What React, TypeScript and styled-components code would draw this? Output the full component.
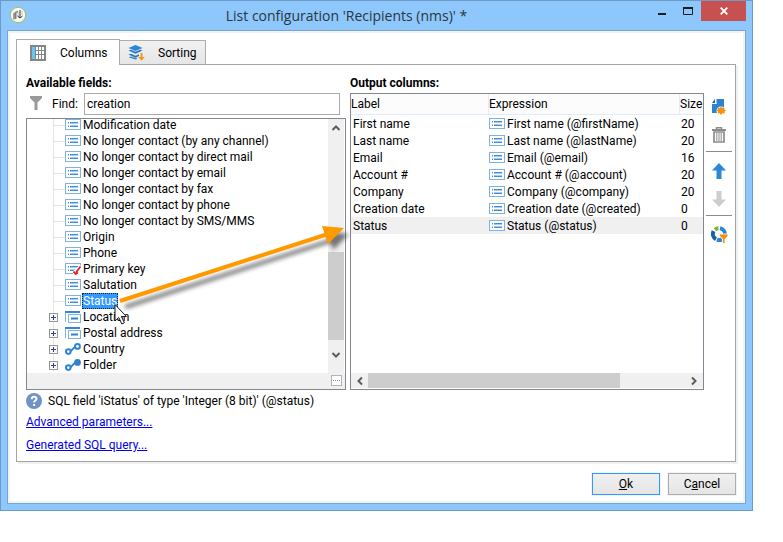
import React from 'react';
import styled, { createGlobalStyle, css } from 'styled-components';

const Global = createGlobalStyle`
  *, *::before, *::after { box-sizing: border-box; }
  body { margin: 0; background: #fff; color: #000; font: 12px/16px Roboto, "Open Sans", sans-serif; }
  button, input { font: inherit; color: inherit; }
  ul { list-style: none; margin: 0; padding: 0; }
  svg { display: block; flex: none; }
`;

const Page = styled.main`
  padding: 0 30px 31px 0;
`;

const Window = styled.section`
  min-width: 640px;
  border: 1px solid #6c9bc6;
  background: #8dc7fb;
  padding: 0 6px 6px;
`;

const TitleBar = styled.header`
  display: grid;
  grid-template-columns: 42px 1fr 102px;
  align-items: start;
  height: 29px;
`;

const AppIcon = styled.div`
  padding: 5px 0 0 2px;
`;

const Title = styled.h1`
  margin: 0;
  text-align: center;
  font: 400 14px/30px "Open Sans", sans-serif;
  color: #2b3640;
  white-space: nowrap;
`;

const WindowButtons = styled.div`
  display: flex;
  justify-content: flex-end;
`;

const CaptionButton = styled.button<{ $close?: boolean }>`
  display: grid;
  place-items: center;
  width: ${(p) => (p.$close ? 45 : 26)}px;
  height: 20px;
  flex: none;
  padding: 0;
  border: 0;
  background: ${(p) => (p.$close ? '#c75050' : 'transparent')};
`;

const Client = styled.div`
  border: 1px solid #78a6d0;
  background: #fff;
  box-shadow: inset 0 0 0 2px #f2f2f2;
  padding: 8px 9px 8px 8px;
`;

const Tabs = styled.div`
  display: flex;
  align-items: flex-end;
`;

const Tab = styled.button<{ $active?: boolean }>`
  display: flex;
  align-items: center;
  gap: ${(p) => (p.$active ? 14 : 13)}px;
  border: 1px solid #acacac;
  padding: 0 10px 0 ${(p) => (p.$active ? 13 : 8)}px;
  ${(p) =>
    p.$active
      ? css`
          height: 26px;
          width: 104px;
          margin-bottom: -1px;
          border-bottom: 0;
          background: #fff;
          z-index: 1;
        `
      : css`
          height: 24px;
          width: 86px;
          border-left: 0;
          border-bottom: 0;
          background: linear-gradient(#f1f1f1, #e6e6e6);
        `}
`;

const Panel = styled.div`
  position: relative;
  border: 1px solid #a5a5a5;
  box-shadow: 2px 2px 0 #f0f0f0;
  padding: 10px 3px 1px 9px;
`;

const Columns = styled.div`
  display: grid;
  grid-template-columns: 320px minmax(0, 1fr) 24px;
  column-gap: 4px;
`;

const Pane = styled.section`
  display: flex;
  flex-direction: column;
`;

const Heading = styled.h2`
  margin: 0;
  padding-bottom: 2px;
  font-size: 12px;
  line-height: 16px;
  font-weight: 700;
`;

const FindRow = styled.div`
  display: flex;
  align-items: center;
  padding: 0 6px 3px 4px;
`;

const FindLabel = styled.label`
  width: 32px;
  margin-left: 10px;
`;

const FindInput = styled.input`
  flex: 1;
  min-width: 0;
  height: 22px;
  border: 1px solid #ababab;
  background: #fff;
  padding: 0 2px;
  outline: 0;
`;

const TreeBox = styled.div`
  flex: 1;
  display: grid;
  grid-template-columns: minmax(0, 1fr) 17px;
  grid-template-rows: 254px 16px;
  border: 1px solid #828790;
`;

const TreeView = styled.div`
  display: flex;
  flex-direction: column;
  justify-content: flex-end;
  overflow: hidden;
`;

const TreeItem = styled.li`
  display: flex;
  align-items: center;
  height: 16px;
  padding-left: 22px;
  white-space: nowrap;
`;

const Branch = styled.span`
  display: flex;
  width: 16px;
`;

const ItemText = styled.span<{ $selected?: boolean }>`
  margin-left: 1px;
  padding: 0 1px;
  ${(p) =>
    p.$selected &&
    css`
      background: #3399ff;
      color: #fff;
      outline: 1px dotted #0b2540;
      outline-offset: -1px;
    `}
`;

const VScroll = styled.div`
  display: grid;
  grid-template-rows: 17px 116px 88px 1fr;
  margin-right: 1px;
  background: #f0f0f0;
  justify-items: stretch;
`;

const Thumb = styled.div`
  background: #cdcdcd;
`;

const ScrollButton = styled.button`
  display: grid;
  place-items: center;
  border: 0;
  padding: 0;
  background: transparent;
`;

const TreeStatus = styled.div`
  grid-column: 1 / -1;
  display: flex;
  justify-content: flex-end;
  background: #f0f0f0;
  padding: 2px 3px 3px 0;
`;

const MoreButton = styled.button`
  width: 11px;
  height: 11px;
  padding: 0;
  border: 1px solid #b4b4b4;
  background: #fff;
  display: grid;
  place-items: center;
`;

const TableBox = styled.div`
  flex: 1;
  display: flex;
  flex-direction: column;
  justify-content: space-between;
  border: 1px solid #828790;
  overflow: hidden;
`;

const Table = styled.table`
  width: 100%;
  table-layout: fixed;
  border-collapse: separate;
  border-spacing: 0;
  white-space: nowrap;
`;

const Th = styled.th<{ $width?: number }>`
  height: 21px;
  padding: 0;
  text-align: left;
  font-weight: 400;
  background: #fcfcfc;
  border-bottom: 1px solid #e0ecfb;
  width: ${(p) => (p.$width ? `${p.$width}px` : 'auto')};
  & + & { border-left: 1px solid #e0ecfb; }
`;

const Tr = styled.tr<{ $current?: boolean }>`
  background: ${(p) => (p.$current ? '#f0f0f0' : 'transparent')};
`;

const Td = styled.td`
  height: 17px;
  padding: 0 0 0 2px;
  line-height: 16px;
`;

const Expression = styled.span`
  display: flex;
  align-items: center;
  gap: 2px;
  height: 17px;
  margin-left: -1px;
`;

const HScroll = styled.div`
  display: grid;
  grid-template-columns: 17px minmax(0, 251fr) minmax(0, 66fr) 17px;
  height: 15px;
  margin-bottom: 1px;
  background: #f0f0f0;
`;

const Toolbar = styled.div`
  display: flex;
  flex-direction: column;
  align-items: center;
  padding-top: 18px;
  margin-left: -2px;
`;

const ToolButton = styled.button`
  display: grid;
  place-items: center;
  width: 24px;
  height: 28px;
  padding: 0;
  border: 0;
  background: transparent;
`;

const Divider = styled.hr`
  width: 100%;
  height: 1px;
  margin: 2px 0 5px;
  border: 0;
  background: #8c8c8c;
`;

const Hint = styled.p`
  display: flex;
  align-items: center;
  gap: 6px;
  margin: 3px 0 5px;
`;

const LinkRow = styled.div`
  padding-bottom: 7px;
`;

const Link = styled.a`
  color: #0000ee;
  text-decoration: underline;
`;

const Footer = styled.footer`
  display: flex;
  justify-content: flex-end;
  gap: 8px;
  padding-top: 11px;
`;

const DialogButton = styled.button<{ $primary?: boolean }>`
  width: 68px;
  height: 22px;
  padding: 0;
  line-height: 18px;
  border: 1px solid ${(p) => (p.$primary ? '#3399ff' : '#acacac')};
  box-shadow: 0 0 0 1px #f3f3f3;
  background: linear-gradient(#f0f0f0, #e5e5e5);
`;

const Overlay = styled.svg`
  position: absolute;
  left: 91px;
  top: 155px;
  pointer-events: none;
  overflow: visible;
`;

const FieldIcon = ({ keyed }: { keyed?: boolean }) => (
  <svg width="16" height="12" viewBox="0 0 16 12">
    <rect x=".5" y=".5" width="15" height="10" fill="#fff" stroke="#7fb2e3" />
    <path d="M3 3.5h1M3 7.5h1M5 3.5h8M5 7.5h8" stroke="#3f8cda" />
    <path d="M3 4.5h1M3 6.5h1M5 4.5h8M5 6.5h8" stroke="#a5cbf0" />
    {keyed && (
      <>
        <path d="M8 12V8l8-6v10z" fill="#fff" />
        <path d="M15.500 3.500L11 9.500M8.500 8.500l2 2.500 2.500-1.500" fill="none" stroke="#e02020" strokeWidth="1.800" />
      </>
    )}
  </svg>
);

const ElementIcon = () => (
  <svg width="16" height="12" viewBox="0 0 16 12">
    <path d="M.5 11V1H15" fill="none" stroke="#7fb2e3" />
    <path d="M0 1h15" stroke="#3486d4" strokeWidth="2" />
    <rect x="3.500" y="3.500" width="12" height="8" fill="#fff" stroke="#7fb2e3" />
    <path d="M6 7.500h7" stroke="#2f83d3" strokeWidth="2" />
  </svg>
);

const LinkIcon = ({ filled }: { filled?: boolean }) => (
  <svg width="16" height="12" viewBox="0 0 16 12" fill="#fff" stroke="#2f83d3" strokeWidth="2">
    <path d="M4 8.500C8 8.500 7 4 11.500 3.500" fill="none" />
    <circle cx="3.300" cy="8.600" r="2.300" />
    <circle cx="12.500" cy="3.400" r="2.400" fill={filled ? '#2f83d3' : '#fff'} />
  </svg>
);

const BranchLine = ({ expandable, last }: { expandable?: boolean; last?: boolean }) => (
  <svg width="16" height="16" viewBox="0 0 16 16">
    <path d={`M8.500 0V${last ? 14 : 16}${expandable ? '' : 'M8 8.500H16'}`} transform="translate(-4 0)" stroke="#e4e4e4" />
    {!expandable && <path d="M12 8.500h4" stroke="#e4e4e4" />}
    {expandable && (
      <>
        <rect x=".5" y="4.500" width="8" height="8" fill="#fafafa" stroke="#969696" />
        <path d="M2 8.500h5M4.500 6v5" stroke="#31458f" />
      </>
    )}
  </svg>
);

const Chevron = ({ d }: { d: string }) => (
  <svg width="10" height="10" viewBox="0 0 10 10" fill="none" stroke="#5c5c5c" strokeWidth="2">
    <path d={d} />
  </svg>
);

type Kind = 'field' | 'key' | 'element' | 'link' | 'folder';

const fields: { text: string; kind: Kind; selected?: boolean }[] = [
  { text: 'Modification date', kind: 'field' },
  { text: 'No longer contact (by any channel)', kind: 'field' },
  { text: 'No longer contact by direct mail', kind: 'field' },
  { text: 'No longer contact by email', kind: 'field' },
  { text: 'No longer contact by fax', kind: 'field' },
  { text: 'No longer contact by phone', kind: 'field' },
  { text: 'No longer contact by SMS/MMS', kind: 'field' },
  { text: 'Origin', kind: 'field' },
  { text: 'Phone', kind: 'field' },
  { text: 'Primary key', kind: 'key' },
  { text: 'Salutation', kind: 'field' },
  { text: 'Status', kind: 'field', selected: true },
  { text: 'Location', kind: 'element' },
  { text: 'Postal address', kind: 'element' },
  { text: 'Country', kind: 'link' },
  { text: 'Folder', kind: 'folder' },
];

const output: [string, string, number][] = [
  ['First name', 'First name (@firstName)', 20],
  ['Last name', 'Last name (@lastName)', 20],
  ['Email', 'Email (@email)', 16],
  ['Account #', 'Account # (@account)', 20],
  ['Company', 'Company (@company)', 20],
  ['Creation date', 'Creation date (@created)', 0],
  ['Status', 'Status (@status)', 0],
];

const kindIcon = (kind: Kind) => {
  if (kind === 'element') return <ElementIcon />;
  if (kind === 'link' || kind === 'folder') return <LinkIcon filled={kind === 'folder'} />;
  return <FieldIcon keyed={kind === 'key'} />;
};

export default function App() {
  return (
    <Page>
      <Global />
      <Window>
        <TitleBar>
          <AppIcon>
            <svg width="18" height="18" viewBox="0 0 18 18">
              <circle cx="9" cy="9" r="7.700" fill="#f8f8f5" stroke="#a3bd62" />
              <path d="M4 13.500V7.500l3-1.500v7z" fill="#9a9f9a" />
              <path d="M5.500 6.500L9 4.500v1.800L7.500 7v5.500L6 13z" fill="#7c827c" />
              <path d="M8.500 6h2v6l-2-1z" fill="#d3d6d0" />
              <path d="M11 4v7.500M8.500 10l2.500 2 2.500-2" fill="none" stroke="#3a3f3a" />
              <path d="M13 5v4" stroke="#c2c6c0" />
            </svg>
          </AppIcon>
          <Title>List configuration 'Recipients (nms)' *</Title>
          <WindowButtons>
            <CaptionButton aria-label="Minimize">
              <svg width="10" height="10" viewBox="0 0 10 10"><path d="M1 8h8" stroke="#1e1e1e" strokeWidth="2" /></svg>
            </CaptionButton>
            <CaptionButton aria-label="Maximize">
              <svg width="10" height="8" viewBox="0 0 10 8">
                <path d="M.5 1v6.500h9V1" fill="none" stroke="#1e1e1e" />
                <path d="M0 1h10" stroke="#1e1e1e" strokeWidth="2" />
              </svg>
            </CaptionButton>
            <CaptionButton $close aria-label="Close">
              <svg width="8" height="8" viewBox="0 0 8 8"><path d="M.7.7l6.600 6.600M7.300.7L.7 7.300" stroke="#fff" strokeWidth="1.800" /></svg>
            </CaptionButton>
          </WindowButtons>
        </TitleBar>

        <Client>
          <Tabs role="tablist">
            <Tab $active role="tab" aria-selected="true">
              <svg width="16" height="16" viewBox="0 0 16 16">
                <rect width="16" height="16" fill="#858585" />
                <rect x="2" y="2" width="3" height="12" fill="#62c8f3" />
                <path d="M6 2h2v3H6zM9 2h2v3H9zM12 2h2v3h-2zM6 6h2v3H6zM9 6h2v3H9zM12 6h2v3h-2zM6 10h2v4H6zM9 10h2v4H9zM12 10h2v4h-2z" fill="#fff" />
              </svg>
              Columns
            </Tab>
            <Tab role="tab" aria-selected="false">
              <svg width="17" height="16" viewBox="0 0 17 16">
                <path d="M7.500 0l7 3-7 3-7-3z" fill="#2f86d6" />
                <path d="M.5 5.500L3 4.800l4.500 2 4.500-2 2.500.7-7 3.300zM.5 9.500L3 8.800l4.500 2L11 9.200V11l-3.500 1.800z" fill="#2676c2" />
                <path d="M.8 12.300l2-.7 4.700 1.600 1-.4.500 1.200-1.500.6z" fill="#2676c2" />
                <path d="M12.500 8h2v4h2.300l-3.300 3.800L10.200 12h2.300z" fill="#f29a1c" />
              </svg>
              Sorting
            </Tab>
          </Tabs>

          <Panel role="tabpanel">
            <Columns>
              <Pane>
                <Heading>Available fields:</Heading>
                <FindRow>
                  <svg width="12" height="16" viewBox="0 0 12 16"><path d="M0 0h12v2L7.500 6.500V14h-3V6.500L0 2z" fill="#999" /></svg>
                  <FindLabel htmlFor="find">Find:</FindLabel>
                  <FindInput id="find" type="text" defaultValue="creation" />
                </FindRow>
                <TreeBox>
                  <TreeView>
                    <ul role="tree" aria-label="Available fields">
                      {fields.map((f, i) => (
                        <TreeItem key={f.text} role="treeitem" aria-selected={!!f.selected}>
                          <Branch>
                            <BranchLine expandable={f.kind !== 'field' && f.kind !== 'key'} last={i === fields.length - 1} />
                          </Branch>
                          {kindIcon(f.kind)}
                          <ItemText $selected={f.selected}>{f.text}</ItemText>
                        </TreeItem>
                      ))}
                    </ul>
                  </TreeView>
                  <VScroll>
                    <ScrollButton aria-label="Scroll up"><Chevron d="M1.500 7L5 3.500 8.500 7" /></ScrollButton>
                    <span />
                    <Thumb />
                    <ScrollButton aria-label="Scroll down"><Chevron d="M1.500 1L5 4.500 8.500 1" /></ScrollButton>
                  </VScroll>
                  <TreeStatus>
                    <MoreButton aria-label="More">
                      <svg width="7" height="1" viewBox="0 0 7 1"><path d="M0 .5h1M2 .5h1M4 .5h1M6 .5h1" stroke="#888" /></svg>
                    </MoreButton>
                  </TreeStatus>
                </TreeBox>
              </Pane>

              <Pane>
                <Heading>Output columns:</Heading>
                <TableBox>
                  <Table>
                    <thead>
                      <tr>
                        <Th $width={137}>Label</Th>
                        <Th>Expression</Th>
                        <Th $width={24}>Size</Th>
                      </tr>
                    </thead>
                    <tbody>
                      {output.map(([label, expression, size]) => (
                        <Tr key={label} $current={label === 'Status'}>
                          <Td>{label}</Td>
                          <Td><Expression><FieldIcon />{expression}</Expression></Td>
                          <Td>{size}</Td>
                        </Tr>
                      ))}
                    </tbody>
                  </Table>
                  <HScroll>
                    <ScrollButton aria-label="Scroll left"><Chevron d="M7 1.500L3.500 5 7 8.500" /></ScrollButton>
                    <Thumb />
                    <span />
                    <ScrollButton aria-label="Scroll right"><Chevron d="M3 1.500L6.500 5 3 8.500" /></ScrollButton>
                  </HScroll>
                </TableBox>
              </Pane>

              <Toolbar role="toolbar" aria-label="Column actions">
                <ToolButton aria-label="Add column">
                  <svg width="14" height="16" viewBox="0 0 14 16">
                    <path d="M4 0h8v9H8v5H0V5h4z" fill="#2b83d2" />
                    <path d="M0 4l3-4v4z" fill="#1d62a8" />
                    <path d="M4 5V0M0 4.500h4.500" stroke="#fff" />
                    <circle cx="9" cy="12" r="4.500" fill="#fff" />
                    <path d="M9 7.600l1.200 1.400 1.900-.8.200 2 1.700 1.200-1.500 1.200.1 2-1.900-.3L9 16l-1.200-1.700-2 .3.200-2L4.400 11.400 6 10.200l-.1-2 1.900.8z" fill="#f0930f" />
                  </svg>
                </ToolButton>
                <ToolButton aria-label="Delete column">
                  <svg width="14" height="16" viewBox="0 0 14 16" fill="none" stroke="#8c8c8c">
                    <path d="M4.500 2.500V.7h5v1.800" strokeWidth="1.500" />
                    <path d="M0 3h14" strokeWidth="2" />
                    <path d="M2 5v10h10V5z" strokeWidth="1.700" />
                    <path d="M4.800 6v8M7 6v8M9.200 6v8" />
                  </svg>
                </ToolButton>
                <Divider />
                <ToolButton aria-label="Move up">
                  <svg width="14" height="16" viewBox="0 0 14 16"><path d="M7 0l7 7.500H9.500V16h-5V7.500H0z" fill="#2b86d6" /></svg>
                </ToolButton>
                <ToolButton aria-label="Move down">
                  <svg width="14" height="16" viewBox="0 0 14 16"><path d="M7 16l7-7.500H9.500V0h-5v8.500H0z" fill="#cdcdcd" /></svg>
                </ToolButton>
                <Divider />
                <ToolButton aria-label="Distribution of values">
                  <svg width="17" height="18" viewBox="0 0 17 18" fill="none" strokeWidth="4">
                    <path d="M4 3.700A6 6 0 0 1 7.500 2.300" stroke="#79b82e" />
                    <path d="M9 2.300A6 6 0 0 1 14 8" stroke="#2b86d6" />
                    <path d="M2.600 5.200A6 6 0 0 0 5 13.200" stroke="#1f5fa6" />
                    <path d="M6 13.600A6 6 0 0 0 11 13.400" stroke="#2b86d6" />
                    <path d="M8.500 8H17v2l-3 3v4.500h-2.500V13l-3-3z" fill="#f0930f" stroke="#fff" strokeWidth=".8" />
                  </svg>
                </ToolButton>
              </Toolbar>
            </Columns>

            <Hint>
              <svg width="16" height="16" viewBox="0 0 16 16">
                <circle cx="8" cy="8" r="8" fill="#6f93c4" />
                <path d="M5.700 6.200C5.700 3 10.500 3.200 10.500 5.800 10.500 7.500 8.100 7.500 8.100 9.500M8.100 11v2" fill="none" stroke="#fff" strokeWidth="2" />
              </svg>
              SQL field 'iStatus' of type 'Integer (8 bit)' (@status)
            </Hint>
            <LinkRow><Link href="#parameters">Advanced parameters...</Link></LinkRow>
            <LinkRow><Link href="#query">Generated SQL query...</Link></LinkRow>

            <Overlay width="240" height="110" viewBox="0 0 240 110" aria-hidden="true">
              <defs>
                <filter id="soft" x="-10%" y="-20%" width="120%" height="150%">
                  <feGaussianBlur stdDeviation="2" />
                </filter>
              </defs>
              <g transform="translate(5 6)" filter="url(#soft)" opacity=".6">
                <path d="M12 81L220 14" stroke="#222" strokeWidth="4" />
                <path d="M236 8l-22-2 6 18z" fill="#222" />
              </g>
              <path d="M12 81L220 14" stroke="#ff9900" strokeWidth="4" />
              <path d="M236 8l-22-2 6 18z" fill="#ff9900" />
              <path d="M7 84.500V101l3.800-3.500 3 6.500 2.600-1.200-3-6.300h5z" fill="#fff" stroke="#1a1a1a" />
            </Overlay>
          </Panel>

          <Footer>
            <DialogButton $primary><u>O</u>k</DialogButton>
            <DialogButton>C<u>a</u>ncel</DialogButton>
          </Footer>
        </Client>
      </Window>
    </Page>
  );
}
